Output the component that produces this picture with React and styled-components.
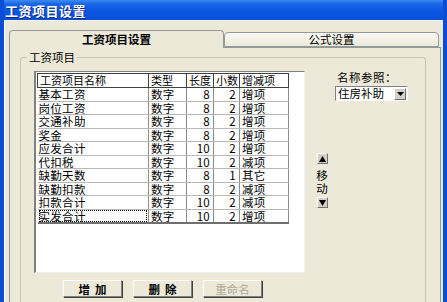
import styled, {createGlobalStyle} from 'styled-components';

const GlobalStyle = createGlobalStyle`
	html, body {
		margin: 0;
		padding: 0;
		background: #ffffff;
	}
	body {
		font-family: 'Noto Sans CJK SC', 'Liberation Sans', sans-serif;
		font-size: 11.5px;
		color: #000;
	}
`;

const items = [
	{name: '基本工资', type: '数字', len: 8, dec: 2, kind: '增项'},
	{name: '岗位工资', type: '数字', len: 8, dec: 2, kind: '增项'},
	{name: '交通补助', type: '数字', len: 8, dec: 2, kind: '增项'},
	{name: '奖金', type: '数字', len: 8, dec: 2, kind: '增项'},
	{name: '应发合计', type: '数字', len: 10, dec: 2, kind: '增项'},
	{name: '代扣税', type: '数字', len: 10, dec: 2, kind: '减项'},
	{name: '缺勤天数', type: '数字', len: 8, dec: 1, kind: '其它'},
	{name: '缺勤扣款', type: '数字', len: 8, dec: 2, kind: '减项'},
	{name: '扣款合计', type: '数字', len: 10, dec: 2, kind: '减项'},
	{name: '实发合计', type: '数字', len: 10, dec: 2, kind: '增项'},
];

export default function App() {
	return (
		<>
			<GlobalStyle />
			<Window>
				<TitleBar>工资项目设置</TitleBar>
				<Body>
					<TabStrip>
						<Tab $active>工资项目设置</Tab>
						<Tab>公式设置</Tab>
					</TabStrip>
					<Panel>
						<GroupBox>
							<Legend>工资项目</Legend>
							<GroupInner>
								<LeftColumn>
									<ListBox>
										<Grid>
											<colgroup>
												<col style={{width: 111}} />
												<col style={{width: 38}} />
												<col style={{width: 27}} />
												<col style={{width: 26}} />
												<col style={{width: 49}} />
											</colgroup>
											<thead>
												<tr>
													<Head>工资项目名称</Head>
													<Head>类型</Head>
													<Head>长度</Head>
													<Head>小数</Head>
													<Head>增减项</Head>
												</tr>
											</thead>
											<tbody>
												{items.map((item, i) => (
													<tr key={item.name}>
														<Cell>
															<CellText $focused={i === items.length - 1}>
																{item.name}
															</CellText>
														</Cell>
														<Cell>{item.type}</Cell>
														<Cell $right>{item.len}</Cell>
														<Cell $right>{item.dec}</Cell>
														<Cell>{item.kind}</Cell>
													</tr>
												))}
											</tbody>
										</Grid>
									</ListBox>
									<ButtonRow>
										<PushButton>增加</PushButton>
										<PushButton>删除</PushButton>
										<PushButton disabled>重命名</PushButton>
									</ButtonRow>
								</LeftColumn>
								<Mover>
									<ArrowButton>
										<svg width="7" height="6" viewBox="0 0 7 6">
											<path d="M3.5 0 L7 6 L0 6 Z" fill="#000" />
										</svg>
									</ArrowButton>
									<MoveLabel>移</MoveLabel>
									<MoveLabel>动</MoveLabel>
									<ArrowButton>
										<svg width="7" height="6" viewBox="0 0 7 6">
											<path d="M0 0 L7 0 L3.5 6 Z" fill="#000" />
										</svg>
									</ArrowButton>
								</Mover>
								<RefColumn>
									<RefLabel>名称参照：</RefLabel>
									<Select>
										<SelectValue>住房补助</SelectValue>
										<SelectArrow>
											<svg width="7" height="4" viewBox="0 0 7 4">
												<path d="M0 0 L7 0 L3.5 4 Z" fill="#000" />
											</svg>
										</SelectArrow>
									</Select>
								</RefColumn>
							</GroupInner>
						</GroupBox>
					</Panel>
				</Body>
			</Window>
		</>
	);
}

const Window = styled.div`
	display: flex;
	flex-direction: column;
	width: 447px;
	height: 302px;
	overflow: hidden;
	box-sizing: border-box;
	border-left: 4px solid #0a4ed6;
	border-right: 4px solid #0a4ed6;
	background-color: #ece9d8;
`;

const TitleBar = styled.div`
	display: flex;
	align-items: center;
	flex: none;
	height: 20px;
	margin: 0 -4px;
	padding-left: 5px;
	background: linear-gradient(
		to bottom,
		#3d8cf5 0%,
		#1a64e6 20%,
		#0b55e3 60%,
		#0a4fd8 100%
	);
	color: #fff;
	font-size: 13px;
	font-weight: bold;
	text-shadow: 1px 1px 0 #0a2a8a;
	letter-spacing: 0.5px;
`;

const Body = styled.div`
	display: flex;
	flex-direction: column;
	flex: 1;
	padding: 9px 2px 0 4px;
	border-top: 1px solid #f4f4f4;
	border-left: 1px solid #ffffff;
`;

const TabStrip = styled.div`
	display: flex;
	align-items: flex-end;
	height: 17px;
	flex: none;
`;

const Tab = styled.div`
	display: flex;
	align-items: center;
	justify-content: center;
	box-sizing: border-box;
	width: 215px;
	height: ${p => (p.$active ? '18px' : '15px')};
	margin-bottom: ${p => (p.$active ? '-1px' : '0')};
	border: 1px solid #919b9c;
	border-bottom: ${p => (p.$active ? 'none' : '1px solid #919b9c')};
	border-radius: 4px 4px 0 0;
	background: ${p =>
		p.$active
			? '#ece9d8'
			: 'linear-gradient(to bottom, #fbfaf5, #ece9d8)'};
	font-weight: ${p => (p.$active ? 'bold' : 'normal')};
	font-size: 11.5px;
	line-height: 13px;
	position: relative;
	z-index: ${p => (p.$active ? 1 : 0)};
`;

const Panel = styled.div`
	flex: 1;
	box-sizing: border-box;
	border: 1px solid #919b9c;
	border-bottom: none;
	background-color: #ece9d8;
	padding: 9px 14px 0 10px;
`;

const GroupBox = styled.div`
	position: relative;
	height: 260px;
	border: 1px solid #c8c5b5;
	border-bottom: none;
	border-radius: 3px 3px 0 0;
`;

const Legend = styled.span`
	position: absolute;
	top: -7px;
	left: 6px;
	padding: 0 2px;
	background-color: #ece9d8;
	line-height: 13px;
`;

const GroupInner = styled.div`
	display: flex;
	align-items: flex-start;
	padding: 13px 0 0 13px;
`;

const LeftColumn = styled.div`
	display: flex;
	flex-direction: column;
`;

const ListBox = styled.div`
	box-sizing: border-box;
	width: 271px;
	height: 202px;
	padding: 1px 0 0 1px;
	background-color: #fff;
	border-top: 1px solid #808080;
	border-left: 2px solid #808080;
	border-right: 1px solid #f0f0f0;
	border-bottom: 1px solid #f0f0f0;
`;

const Grid = styled.table`
	border-collapse: collapse;
	table-layout: fixed;
	width: 251px;
	border-bottom: 2px solid #6f6f6f;
	border-right: 1px solid #6f6f6f;
`;

const Head = styled.th`
	height: 13px;
	padding: 0 2px;
	border: 1px solid #404040;
	font-weight: normal;
	text-align: left;
	font-size: 11px;
	line-height: 13px;
	white-space: nowrap;
`;

const Cell = styled.td`
	height: 12.5px;
	padding: 0 ${p => (p.$right ? '3px' : '2px')} 0 2px;
	border-right: 1px solid #8c8c8c;
	border-bottom: 1px solid #b8b8b8;
	text-align: ${p => (p.$right ? 'right' : 'left')};
	font-size: 11.5px;
	line-height: 12.5px;
	letter-spacing: 0.3px;
	white-space: nowrap;
`;

const CellText = styled.span`
	display: block;
	margin: 0 -1px;
	outline: ${p => (p.$focused ? '1px dotted #000' : 'none')};
	outline-offset: -1px;
`;

const ButtonRow = styled.div`
	display: flex;
	gap: 11px;
	margin: 7px 0 0 29px;
`;

const PushButton = styled.button`
	box-sizing: border-box;
	width: 59px;
	height: 17px;
	padding: 0;
	border: 1px solid;
	border-color: #ffffff #808080 #808080 #ffffff;
	box-shadow: 1px 1px 0 #404040;
	background-color: #ece9d8;
	color: ${p => (p.disabled ? '#aca899' : '#000')};
	font-family: 'Noto Sans CJK SC', sans-serif;
	font-size: 11.5px;
	font-weight: ${p => (p.disabled ? 'normal' : 'bold')};
	letter-spacing: ${p => (p.disabled ? '0' : '5px')};
	text-indent: ${p => (p.disabled ? '0' : '5px')};
	line-height: 14px;
`;

const Mover = styled.div`
	display: flex;
	flex-direction: column;
	align-items: center;
	width: 12px;
	margin: 82px 0 0 11px;
`;

const ArrowButton = styled.div`
	display: flex;
	align-items: center;
	justify-content: center;
	box-sizing: border-box;
	width: 11px;
	height: 11px;
	border: 1px solid;
	border-color: #ffffff #707070 #707070 #ffffff;
	background-color: #d4d0c8;
	margin: 0 0 5px;
`;

const MoveLabel = styled.span`
	font-size: 11.5px;
	line-height: 13px;
	&:last-of-type {
		margin-bottom: 2px;
	}
`;

const RefColumn = styled.div`
	display: flex;
	flex-direction: column;
	margin-left: 7px;
`;

const RefLabel = styled.span`
	margin-left: 2px;
	line-height: 13px;
	letter-spacing: 0.5px;
`;

const Select = styled.div`
	display: flex;
	align-items: center;
	box-sizing: border-box;
	width: 73px;
	height: 15px;
	margin-top: 2px;
	border: 1px solid;
	border-color: #808080 #ffffff #ffffff #808080;
	background-color: #fff;
`;

const SelectValue = styled.span`
	flex: 1;
	padding-left: 2px;
	line-height: 13px;
`;

const SelectArrow = styled.span`
	display: flex;
	align-items: center;
	justify-content: center;
	box-sizing: border-box;
	width: 12px;
	height: 12px;
	margin-right: 1px;
	border: 1px solid;
	border-color: #ffffff #707070 #707070 #ffffff;
	background-color: #d4d0c8;
`;
